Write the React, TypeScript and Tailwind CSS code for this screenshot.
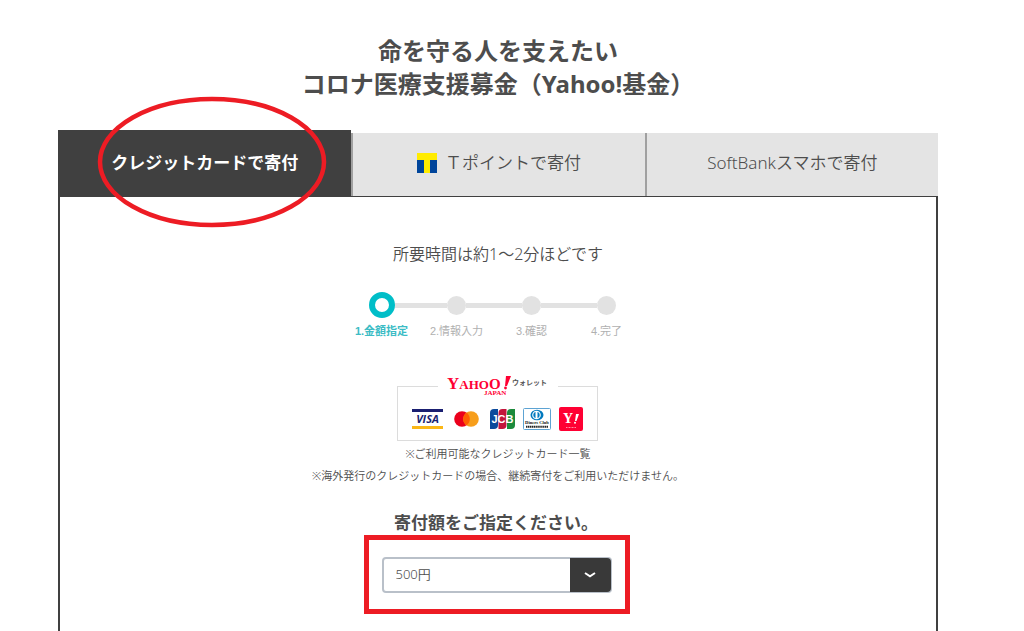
/**
 * Donation page: payment method tabs, progress steps and amount selection.
 */

import type { ReactNode } from "react";

const TABS = [
    { id: "card", label: "クレジットカードで寄付" },
    { id: "tpoint", label: "Ｔポイントで寄付" },
    { id: "softbank", label: "SoftBankスマホで寄付" },
];

const STEPS = ["1.金額指定", "2.情報入力", "3.確認", "4.完了"];

const AMOUNTS = ["500円", "1,000円", "3,000円", "5,000円"];

function TPointIcon() {
    return (
        <svg viewBox="0 0 20 20" className="h-5 w-5 shrink-0" aria-hidden="true">
            <path d="M0 0H20V7H0Z" fill="#ffec00" />
            <path d="M0 7H7V20H0ZM13 7H20V20H13Z" fill="#00459b" />
            <path d="M7 6H13V20H7Z" fill="#ffec00" />
        </svg>
    );
}

function YahooLogo() {
    return (
        <svg
            viewBox="0 0 104 22"
            className="h-[22px] w-[104px]"
            role="img"
            aria-label="Yahoo! JAPAN ウォレット"
        >
            <g fill="#ff0033" fontFamily="Liberation Serif, serif" fontWeight="700">
                <text x="1" y="14" fontSize="17">
                    Y<tspan fontSize="13">AHO</tspan>
                    <tspan fontSize="15">O</tspan>
                </text>
                <text x="38" y="20" fontSize="7">JAPAN</text>
                <path d="M60 1L65 1L61 11L59 11Z" />
                <circle cx="59.5" cy="13" r="1.4" />
            </g>
            <text
                x="66"
                y="10"
                fontSize="7"
                fontWeight="700"
                fill="#555"
                fontFamily="Noto Sans CJK JP, sans-serif"
            >
                ウォレット
            </text>
        </svg>
    );
}

function VisaLogo() {
    return (
        <svg viewBox="0 0 31 20" className="h-5 w-[31px]" role="img" aria-label="VISA">
            <path d="M0 0H31V3H0Z" fill="#1a1f71" />
            <path d="M0 17H31V20H0Z" fill="#fbb716" />
            <text
                x="15.5"
                y="14"
                textAnchor="middle"
                fontSize="11"
                fontWeight="700"
                fontStyle="italic"
                fill="#1a1f71"
                fontFamily="Open Sans, sans-serif"
            >
                VISA
            </text>
        </svg>
    );
}

function MastercardLogo() {
    return (
        <svg viewBox="0 0 25 16" className="h-4 w-[25px]" role="img" aria-label="Mastercard">
            <circle cx="8" cy="8" r="7.8" fill="#eb001b" />
            <circle cx="17" cy="8" r="7.8" fill="#f79e1b" />
            <path d="M12.5 1.6A7.8 7.8 0 0 1 12.5 14.4A7.8 7.8 0 0 1 12.5 1.6Z" fill="#ff5f00" />
        </svg>
    );
}

function JcbLogo() {
    return (
        <svg viewBox="0 0 25 20" className="h-5 w-[25px]" role="img" aria-label="JCB">
            <path d="M0 4Q0 0 4 0H8V16Q8 20 4 20H0Z" fill="#0b4a9c" />
            <path d="M8.5 4Q8.5 0 12.5 0H16.5V16Q16.5 20 12.5 20H8.5Z" fill="#c3143b" />
            <path d="M17 4Q17 0 21 0H25V16Q25 20 21 20H17Z" fill="#1c8a3c" />
            <text
                x="12.5"
                y="14"
                fill="#fff"
                fontSize="11"
                fontWeight="700"
                fontFamily="Liberation Sans, sans-serif"
                textAnchor="middle"
            >
                JCB
            </text>
        </svg>
    );
}

function DinersLogo() {
    return (
        <svg viewBox="0 0 28 22" className="h-[22px] w-7" role="img" aria-label="Diners Club International">
            <rect x="0.5" y="0.5" width="27" height="21" rx="1" fill="#fff" stroke="#5da3d3" />
            <ellipse cx="14" cy="7" rx="6.5" ry="5.3" fill="#0079be" />
            <circle cx="13.5" cy="7" r="4.3" fill="#fff" />
            <path d="M12.5 3.8A3.4 3.4 0 0 0 12.5 10.2ZM14.5 3.8A3.4 3.4 0 0 1 14.5 10.2Z" fill="#0079be" />
            <text
                x="14"
                y="16"
                textAnchor="middle"
                fontSize="4.6"
                fontWeight="700"
                fill="#111"
                fontFamily="Liberation Serif, serif"
            >
                Diners Club
            </text>
            {/* INTERNATIONAL strapline, too small to read */}
            <path d="M3 18.7H25" stroke="#222" strokeWidth="2" strokeDasharray="1.4 0.5" />
        </svg>
    );
}

function YahooCardLogo() {
    return (
        <svg viewBox="0 0 24 24" className="h-6 w-6" role="img" aria-label="Yahoo! JAPANカード">
            <rect width="24" height="24" rx="2" fill="#ff0033" />
            <text
                x="4"
                y="16"
                fontSize="14"
                fontWeight="700"
                fill="#fff"
                fontFamily="Liberation Serif, serif"
            >
                Y
            </text>
            <path d="M17 7H20L17.5 14H16Z" fill="#fff" />
            <circle cx="16" cy="15.7" r="1" fill="#fff" />
            <path d="M7 20.5H17" stroke="#ff8fa5" strokeDasharray="1 0.5" />
        </svg>
    );
}

function Circled({ children }: { children: ReactNode }) {
    return (
        <div className="relative flex">
            {children}
            <svg
                viewBox="0 0 230 132"
                className="pointer-events-none absolute -top-[34px] left-[39px] z-10 h-[132px] w-[230px]"
                aria-hidden="true"
            >
                <ellipse cx="115" cy="66" rx="112" ry="63" fill="none" stroke="#ed1c24" strokeWidth="4.5" />
            </svg>
        </div>
    );
}

function PaymentTabs() {
    return (
        <div role="tablist" className="grid grid-cols-3">
            <Circled>
                <button
                    role="tab"
                    aria-selected="true"
                    className="h-[66px] flex-1 bg-[#404040] text-[17px] font-bold text-white"
                >
                    {TABS[0].label}
                </button>
            </Circled>
            {TABS.slice(1).map((tab) => (
                <button
                    key={tab.id}
                    role="tab"
                    aria-selected="false"
                    className="mt-[3px] flex h-[63px] items-center justify-center gap-2 border-l-2 border-[#a0a0a0] bg-[#e4e4e4] pb-1 text-[17px] font-[350]"
                >
                    {tab.id === "tpoint" && <TPointIcon />}
                    {tab.label}
                </button>
            ))}
        </div>
    );
}

function Steps() {
    return (
        <ol className="mt-[26px] mr-2 flex">
            {STEPS.map((step, i) => (
                <li key={step} className="flex w-[75px] flex-col items-center">
                    <div className="flex h-[26px] w-full items-center">
                        <div className={i === 0 ? "h-[5px] flex-1" : "h-[5px] flex-1 bg-[#e2e2e2]"} />
                        <div
                            className={
                                i === 0
                                    ? "h-[26px] w-[26px] rounded-full border-[6px] border-[#00bec8]"
                                    : "h-[19px] w-[19px] rounded-full bg-[#e2e2e2]"
                            }
                        />
                        <div className={i === 3 ? "h-[5px] flex-1" : "h-[5px] flex-1 bg-[#e2e2e2]"} />
                    </div>
                    <span
                        className={
                            i === 0
                                ? "mt-[5px] font-['Liberation_Sans','Noto_Sans_CJK_JP',sans-serif] text-[11px] leading-4 font-bold text-[#3cbcc5]"
                                : "mt-[5px] font-['Liberation_Sans','Noto_Sans_CJK_JP',sans-serif] text-[11px] leading-4 text-[#b0b0b0]"
                        }
                    >
                        {step}
                    </span>
                </li>
            ))}
        </ol>
    );
}

function AcceptedCards() {
    return (
        <fieldset className="mt-9 mr-px h-[66px] w-[201px] border border-[#dcdcdc]">
            <legend className="mx-auto px-2">
                <YahooLogo />
            </legend>
            <div className="flex items-center justify-center gap-2 pt-[10px]">
                <VisaLogo />
                <div className="flex w-[31px] justify-center">
                    <MastercardLogo />
                </div>
                <JcbLogo />
                <DinersLogo />
                <YahooCardLogo />
            </div>
        </fieldset>
    );
}

function AmountSelect() {
    return (
        <div className="mr-[3px] border-[5px] border-[#ed1c24] px-[13px] pt-[17px] pb-4">
            <div className="relative flex w-[230px]">
                <select
                    id="amount"
                    defaultValue="500円"
                    className="h-9 w-full appearance-none rounded border-2 border-[#b9c0c9] bg-white pl-3 text-[13px] font-[350]"
                >
                    {AMOUNTS.map((amount) => (
                        <option key={amount}>{amount}</option>
                    ))}
                </select>
                <span className="pointer-events-none absolute inset-y-px right-px flex w-[41px] items-center justify-center rounded-r-sm bg-[#393939]">
                    <svg viewBox="0 0 12 6" className="h-[6px] w-3" aria-hidden="true">
                        <path d="M1 1L6 4.3L11 1" fill="none" stroke="#fff" strokeWidth="2" />
                    </svg>
                </span>
            </div>
        </div>
    );
}

export default function App() {
    return (
        <div className="h-screen overflow-hidden bg-white pr-[86px] pl-[58px] font-['Noto_Sans','Noto_Sans_CJK_JP',sans-serif] text-[#4d4d4d]">
            <h1 className="pt-[34px] text-center text-2xl leading-[33px] font-bold">
                命を守る人を支えたい
                <br />
                コロナ医療支援募金（Yahoo!基金）
            </h1>

            <main className="mt-[30px]">
                <PaymentTabs />
                <section className="-mt-px flex min-h-screen flex-col items-center border-2 border-[#404040] pt-[45px]">
                    <p className="text-base leading-6 font-[350]">所要時間は約1～2分ほどです</p>
                    <Steps />
                    <AcceptedCards />

                    <div className="mt-[2px] text-center text-[11px] leading-[22px] font-[350]">
                        <p>※ご利用可能なクレジットカード一覧</p>
                        <p>※海外発行のクレジットカードの場合、継続寄付をご利用いただけません。</p>
                    </div>

                    <label htmlFor="amount" className="mt-6 mr-1 text-[17px] leading-6 font-bold">
                        寄付額をご指定ください。
                    </label>
                    <AmountSelect />
                </section>
            </main>
        </div>
    );
}
